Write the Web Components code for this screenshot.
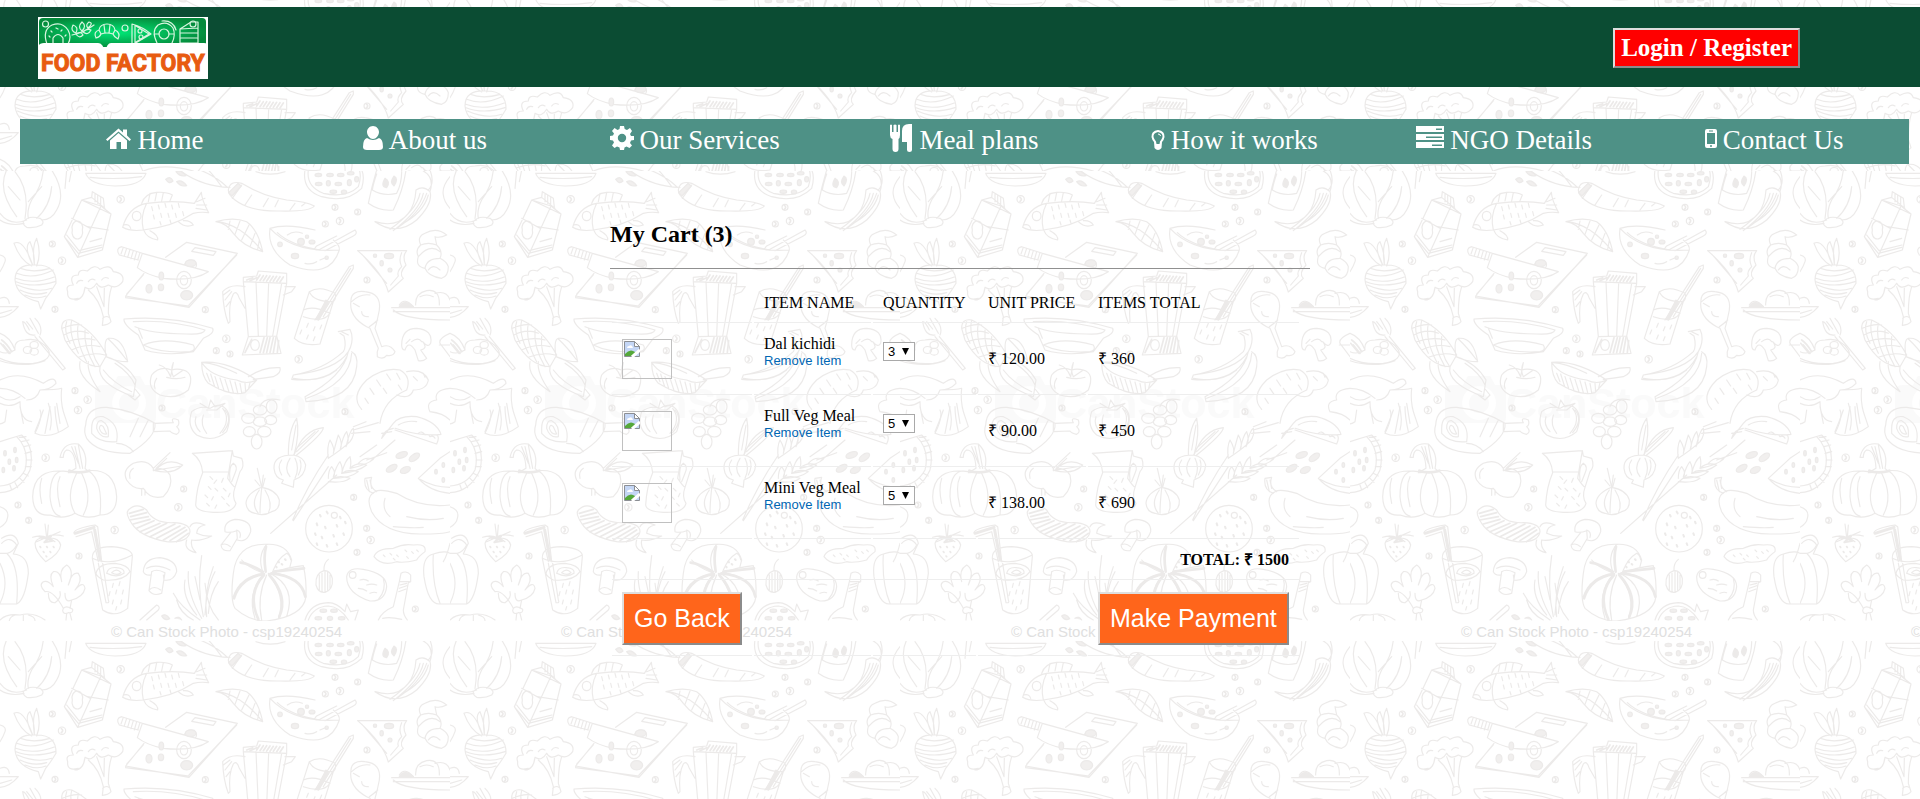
<!DOCTYPE html>
<html lang="en">
<head>
<meta charset="utf-8">
<title>Food Factory - My Cart</title>
<style>
html, body { margin: 0; min-height: 100%; background: #fff; }
body { font: 16px "Liberation Serif", serif; color: #000; }
</style>
</head>
<body>
<food-page>
  <food-header></food-header>
  <food-nav>
    <nav-item icon="home">Home</nav-item>
    <nav-item icon="user">About us</nav-item>
    <nav-item icon="cog">Our Services</nav-item>
    <nav-item icon="cutlery">Meal plans</nav-item>
    <nav-item icon="bulb">How it works</nav-item>
    <nav-item icon="server">NGO Details</nav-item>
    <nav-item icon="mobile">Contact Us</nav-item>
  </food-nav>
  <shopping-cart></shopping-cart>
</food-page>

<template id="backdrop">
<style>
:host { position: absolute; inset: 0; overflow: hidden; z-index: -1; }
.doodles { display: block; width: 100%; height: 100%; }
.credits { position: absolute; left: 0; top: 622px; display: grid; grid-auto-flow: column; grid-auto-columns: 450px; }
.credits span { padding-left: 111px; font: 15px/20px "Liberation Sans", sans-serif; color: #e0e0e0; white-space: nowrap; }
</style>
<svg class="doodles" aria-hidden="true">
<defs><pattern id="food" width="450" height="470" y="171" patternUnits="userSpaceOnUse">
<rect width="450" height="470" fill="#fff"/>
<g fill="#fafafa"><path fill-rule="evenodd" d="M95 222q0-8 8-8h10l5-9h22l5 9h6q5 0 5 6v26q0 6-6 6H101q-6 0-6-6zM129 215a17 17 0 1 0 .1 0zM129 222a10 10 0 1 1-.1 0z"/>
<text x="156" y="247" font-family="Liberation Sans, sans-serif" font-weight="bold" font-size="43">CanStock</text></g>
<g fill="none" stroke="#eceae9" stroke-width="3.4" stroke-linecap="round" stroke-linejoin="round">
<g transform="translate(0 -1) scale(.33333)">
<!-- cabbage -->
<path d="M0 130Q30 170 80 150M20 0Q-10 60 50 140M45 5Q90 60 75 145M130 0Q125 50 95 90Q80 120 85 145M155 0Q200 70 170 120Q155 150 125 150M110 145Q150 110 155 50M60 90L25 50M85 95L125 50M70 155Q85 135 120 145Q135 155 125 165Q105 175 80 172Q68 165 70 155M200 0L195 55M215 0L208 35M0 150Q30 170 72 160"/>
<!-- plate -->
<path d="M257 10H438Q425 48 345 48Q270 45 257 10M270 22Q350 30 425 20"/>
<!-- seeds -->
<path d="M497 28q15-12 22 5q-12 12-22-5M530 35q15-8 30 12q-18 5-30-12M528 5q15-8 30 12q-18 5-30-12" fill="#f1efee"/>
<!-- milk carton -->
<path d="M193 200L245 90L333 132L307 240L233 262ZM245 90L303 108L333 132M303 108L233 262M245 90L275 82L315 115M275 82L277 65L310 85L313 112M285 70v25M293 75v25M302 80v28M262 170L325 180M215 145L270 175M217 180a16 20 0 1 0 30 0a16 20 0 1 0-30 0M197 205L235 250L305 232M200 195L237 242L306 225M270 215l35-10"/>
<!-- fish -->
<path d="M368 172Q385 110 440 100Q520 90 583 100L604 67Q605 90 626 128Q600 125 580 130Q520 170 430 180Q390 185 368 172M440 100Q420 140 430 180M425 100Q435 70 470 67Q500 65 517 75L510 92M450 70l-5 25M470 68l-5 25M490 68l-5 25M432 182Q440 205 473 210Q475 195 450 182M535 155Q555 175 580 165Q570 150 550 152M590 95l25-10M590 105l30 0M588 115l32 5M397 138a13 14 0 1 0 26 0a13 14 0 1 0-26 0M370 165q18-5 22 10M455 110l3 12M475 105l3 12M495 100l3 12M515 105l3 12M535 100l3 12M460 135l3 12M482 130l3 12M504 130l3 12M526 130l3 12M548 125l3 12M480 155l3 10M510 150l3 10"/>
<!-- carrot -->
<path d="M545 5Q610 50 690 52M600 0Q650 20 680 50M625 0Q640 15 665 50M685 60Q690 30 725 40Q790 80 860 90Q920 95 943 108Q930 125 840 123Q750 125 705 90Q685 75 685 60M690 75L715 40M697 85L725 45M735 105L755 75M790 110L805 85M835 90l-10 20M870 120l15-20M905 108l10-8"/>
<path d="M686 68L714 40L724 48L696 78Z" fill="#f1efee"/>
<path d="M768 5Q810 20 855 5"/>
<!-- leaf -->
<path d="M648 155Q700 140 740 155Q775 180 788 245Q730 230 700 190Q680 160 648 155M648 155Q720 160 788 245M690 153l-5 25M720 153l-15 40M747 165l-22 45M765 190l-15 40M778 210l-5 28"/>
<!-- pomegranate -->
<path d="M915 0Q905 60 965 80Q1040 100 1085 55Q1095 20 1085 0M925 0Q918 50 970 70Q1040 85 1075 50Q1085 20 1078 0"/>
<g fill="#f1efee"><ellipse cx="955" cy="15" rx="10" ry="5"/><ellipse cx="990" cy="15" rx="10" ry="5"/><ellipse cx="1022" cy="15" rx="10" ry="5"/><ellipse cx="1052" cy="10" rx="10" ry="5"/><ellipse cx="956" cy="42" rx="10" ry="5"/><ellipse cx="985" cy="40" rx="6" ry="8"/><ellipse cx="1015" cy="42" rx="10" ry="5"/><ellipse cx="1048" cy="38" rx="6" ry="9"/><ellipse cx="1000" cy="65" rx="10" ry="5"/><ellipse cx="1032" cy="66" rx="8" ry="6"/><ellipse cx="1070" cy="28" rx="6" ry="8"/></g>
<!-- jar, chilli -->
<path d="M1130 0Q1115 50 1105 100Q1140 125 1180 120Q1210 60 1218 0M1130 12Q1120 40 1117 60Q1150 80 1190 70Q1205 40 1205 5"/>
<path d="M1155 25q18 10 5 28q-20-2-5-28M1182 18q15 8 0 30q-15-10 0-30" fill="#eceae9"/>
<path d="M1265 0Q1305 20 1290 65Q1300 100 1250 150Q1190 200 1125 155Q1190 175 1225 130Q1245 105 1248 60Q1270 45 1290 65M1290 0Q1305 40 1285 60M1285 75Q1270 130 1200 165M1280 70Q1260 130 1190 175M1270 70Q1260 120 1180 182M1260 70Q1250 120 1170 178"/>
<!-- soup bowl -->
<path d="M810 175Q860 160 945 180M1000 210Q1020 225 1018 240Q880 250 810 175Q800 240 870 285Q990 330 1018 240M832 188Q870 225 960 240M960 238L1065 180Q1075 190 1060 198L975 242M960 238Q935 245 950 228L1010 198M862 195q20-15 45-5M915 280q20 5 35-5M960 270l20-8"/>
<g fill="#f1efee"><circle cx="840" cy="223" r="7"/><ellipse cx="885" cy="258" rx="11" ry="8"/><circle cx="903" cy="215" r="10"/><ellipse cx="936" cy="216" rx="9" ry="6"/><circle cx="921" cy="200" r="5"/><circle cx="980" cy="263" r="5"/></g>
<!-- beet -->
<path d="M95 288Q60 270 42 220Q70 205 98 285Q70 230 90 215Q105 250 103 285Q95 230 110 205Q125 250 110 288M45 330Q45 280 110 285Q170 285 168 340Q150 370 137 385L122 417L115 395Q50 380 45 330M50 310Q100 330 160 300M47 325Q100 345 165 320M48 335Q100 355 165 335M52 345Q110 370 155 355M60 360Q100 380 140 368M75 375Q110 390 138 378M60 295Q100 310 150 295"/>
<path d="M0 255q20 5 15 20Q10 290 0 305"/>
<!-- broccoli -->
<path d="M235 385Q200 395 203 365Q195 345 220 345Q205 315 235 315Q235 295 262 303Q285 280 300 298Q330 280 340 305Q375 310 368 335Q350 360 325 345Q300 360 290 340Q275 365 255 352Q250 390 225 390M265 360Q300 390 310 440L307 466Q325 465 333 455L325 430Q325 380 335 350M290 350L312 410L313 355M308 445q10-10 20-2M230 340q5-12 18-8M265 335q8-12 20-5M305 330q8-12 20-5"/>
<!-- knife and board -->
<path d="M497 262L560 217L712 250L567 412L377 378L432 310M377 378V383L567 408M380 372L430 315M567 405L710 255M585 233L648 245L640 256L575 244ZM427 250L625 305Q580 335 490 325Q440 315 412 293L427 250L365 230Q345 235 358 255L415 270M370 232l-7 20M380 235l-7 22M390 238l-7 24M400 242l-7 24M410 245l-7 25M420 248l-7 22M550 330m-20 0a22 26 0 1 0 44 0a22 26 0 1 0-44 0M541 331a11 14 0 1 0 22 0a11 14 0 1 0-22 0M553 285q8-20 30-14q12 12 3 23"/>
<g fill="#f1efee"><ellipse cx="447" cy="356" rx="9" ry="13"/><ellipse cx="483" cy="352" rx="8" ry="10"/><ellipse cx="484" cy="318" rx="7" ry="12"/><ellipse cx="560" cy="376" rx="18" ry="14"/><ellipse cx="572" cy="280" rx="16" ry="10"/></g>
<!-- baking dish -->
<path d="M372 447Q510 435 638 475Q645 490 610 505L580 545Q500 560 435 540L415 495Q370 465 372 447M400 455Q510 448 615 480Q610 495 560 492Q450 490 405 470M430 525Q490 500 580 525Q590 540 570 545Q480 550 430 525M415 475l12 30"/>
<!-- blender -->
<path d="M730 335L860 340L830 498L745 500ZM745 500L727 555L843 550L830 498M730 335V322L770 318M770 318L775 303L860 310V340M768 335L775 498M806 338L800 498M845 340L818 498M735 350Q690 340 668 365Q670 420 685 460L690 455Q685 400 700 372Q710 360 718 385L735 415M855 350H886L875 365L850 375M752 525a13 16 0 1 0 26 0a13 16 0 1 0-26 0M670 375l20-15M675 390l20-25M678 410l12-15"/>
<path d="M740 330l18-7 M750 332l20-9M770 330l10-15M780 332l10-15M790 332l10-15M800 333l10-15M810 334l10-15M820 334l10-15M830 335l10-15M840 336l10-15M735 548l20-40M780 548l12-45M790 548l12-45M800 548l10-45M810 548l10-45M820 548l8-45M832 547l4-35" stroke-width="5"/>
<!-- glass with straw -->
<path d="M928 365Q960 345 1005 370Q1010 385 1000 395L960 522Q910 530 883 505L928 365Q940 395 1000 395M910 420Q940 405 990 430Q970 460 910 440M945 450L1048 290L1060 285L1060 295L970 440M1052 295L955 450M925 460l-5 12M945 470l-5 12M965 465l-5 12M905 480l-5 12M925 495l-5 12M945 500l-5 12"/>
<path d="M978 390L948 448L956 450L986 400Z" fill="#eceae9"/>
<!-- pizza slice -->
<path d="M1073 242L1220 242Q1205 260 1218 285Q1195 310 1210 325L1165 366Q1150 310 1073 242M1205 248Q1195 270 1205 290Q1190 305 1195 318L1172 345M1085 252L1160 340"/>
<g fill="#f1efee"><ellipse cx="1167" cy="258" rx="14" ry="8"/><ellipse cx="1145" cy="280" rx="5" ry="8"/><circle cx="1125" cy="257" r="5"/><circle cx="1170" cy="300" r="6"/></g>
<!-- croissant -->
<path d="M1340 195Q1310 170 1275 190Q1250 200 1262 225Q1245 240 1255 260Q1245 290 1275 295Q1285 320 1325 325Q1345 318 1345 290M1340 195Q1320 205 1305 200L1310 225Q1330 245 1320 265Q1340 275 1345 290M1262 225Q1285 215 1310 225M1255 260Q1290 220 1320 245M1275 295Q1280 265 1320 265M1285 300Q1300 280 1320 300M1350 20Q1325 50 1330 75Q1332 95 1350 115"/>
<!-- drumstick -->
<path d="M1100 470Q1045 440 1053 390Q1055 360 1095 365Q1145 370 1138 420Q1130 460 1125 475L1145 530Q1170 520 1185 545Q1180 560 1160 556Q1150 570 1132 560Q1130 545 1135 535L1110 475ZM1055 395Q1080 370 1110 375M1085 425Q1085 440 1105 440M1108 470q15-10 25-20M1060 400l18 10"/>
<!-- fruit plate -->
<path d="M1175 413H1350M1180 420Q1210 450 1350 450M1180 425H1350M1198 405q15-25 42 5M1247 405Q1245 370 1280 362Q1320 355 1318 405M1305 370Q1340 360 1350 390M1260 380q20-10 40 0M0 410H55Q30 440 0 442M0 385Q25 375 28 400M0 430l35-10"/>
<path d="M1198 410q15-25 42 0z" fill="#eceae9"/>
<!-- fork and plate -->
<path d="M0 490Q30 500 45 540Q20 555 0 545M45 540Q40 510 75 510Q120 500 145 540Q160 570 100 580Q40 585 0 565M0 572Q70 595 135 572M68 455Q75 500 105 495M90 445L115 490M105 445Q130 470 120 495M68 455q8 0 20 25M80 455l18 22M118 500L196 595L188 600L105 500M70 540a12 10 0 1 0 25 0a12 10 0 1 0-25 0M90 525a12 10 0 1 0 25 0a12 10 0 1 0-25 0M90 545a12 10 0 1 0 25 0a12 10 0 1 0-25 0"/>
<path d="M5 510q15 10 30 35M10 525l20 25M2 520l25 30" stroke-width="5"/>
<!-- corn -->
<path d="M185 475Q185 445 215 450Q280 480 320 555L300 590Q240 590 195 510ZM200 455Q190 480 210 520M215 452Q205 490 235 550M235 460Q225 510 260 575M255 480Q250 530 285 590M275 500Q270 550 298 588M187 475Q220 460 245 465M192 495Q230 475 265 490M200 515Q245 500 285 510M215 540Q255 520 300 530M235 562Q275 545 315 555M318 560Q310 510 325 505Q370 500 383 575Q350 575 318 560M325 507Q350 530 380 570M240 575Q230 620 300 665Q260 610 265 575M300 590Q290 640 400 680L408 630Q380 580 320 560M345 580Q390 610 405 645M310 600Q340 640 395 665M385 675l20 15 15-15-15-18"/>
<!-- mushroom -->
<path d="M1205 525Q1205 475 1250 475Q1300 480 1292 520Q1285 535 1268 515Q1285 535 1262 540L1280 565Q1270 575 1255 572L1245 540Q1225 510 1215 540Q1205 540 1205 525M1218 520l12-12M1235 515Q1255 500 1265 515M1350 490Q1315 505 1320 520L1350 560M1318 525H1350"/>
<!-- banana -->
<path d="M1015 485L1050 478L1055 492Q1060 520 1045 545Q1010 600 880 615L875 628Q1000 640 1040 560M1020 490L1032 498Q1040 530 1030 545Q970 600 880 615M1045 545Q1030 620 915 680L918 695Q1060 690 1070 590Q1075 555 1055 545M1055 550Q1050 640 920 685M880 625Q960 640 1010 600M1025 485l20 10"/>
<!-- tomato -->
<path d="M515 600Q480 585 455 615Q440 655 480 675Q530 690 565 660Q585 610 550 600Q530 595 515 600M478 585Q500 590 512 620L520 578Q510 600 520 620L550 600M500 622Q530 630 555 622M470 625Q460 640 465 655"/>
<!-- pan -->
<path d="M605 577Q680 570 770 630Q740 645 710 630Q630 620 605 577Q605 620 625 640Q690 680 735 668L770 630M605 577Q650 580 710 610M745 620Q790 590 840 593Q845 610 820 620Q790 625 760 628M620 610l10 25M632 612l12 38M645 620l12 38M660 624l12 38M675 628l12 38M690 632l10 36M705 636l8 32M720 640l5 28M735 640l2 25M750 638l-5 20"/>
<!-- cookies and lettuce -->
<path d="M1085 718Q1050 680 1100 630Q1150 590 1200 600Q1235 620 1220 660Q1150 690 1140 760M1220 605Q1270 595 1285 630Q1280 660 1240 660Q1230 690 1190 675M1130 630l12 18M1160 612l12 18M1190 610l10 18M1110 655l12 18M1150 655l10 15M1195 645l10 15M1095 685l10 15M1240 620l12 12M1270 610l5 12"/>
<path d="M0 630Q60 600 130 640Q165 615 168 640Q150 660 120 660Q110 690 80 690M120 660Q170 660 185 655Q180 700 195 740L205 770Q150 810 105 790Q130 740 120 720M0 680Q30 700 60 680M0 655Q40 655 75 685M145 700Q160 740 150 780M170 700L180 760M1350 655Q1300 660 1310 690Q1275 695 1290 725Q1330 730 1350 750"/>
</g>
<g transform="translate(0 229) scale(.33333)">
<path d="M0 10Q30 25 60 5Q60 60 95 65M105 95Q120 60 130 30M135 100Q145 50 150 20M175 95Q165 50 165 20M20 30L15 65Q0 75 -5 70M60 20L70 70M840 0Q790 -10 780 20"/>
<!-- ham -->
<path d="M257 75Q260 20 320 22Q400 30 465 70Q470 110 390 160Q290 160 260 115Q250 95 257 75M275 85Q275 45 310 50Q360 70 350 125Q300 130 275 100ZM290 85Q290 60 305 62Q330 75 325 110Q300 115 290 85M298 85Q300 70 310 80L320 102Q305 105 298 85M465 70L520 68Q510 50 535 60Q540 75 530 80Q545 95 530 103Q515 100 510 93L460 95M460 70v25M350 130Q380 130 400 155M420 110L445 60M390 110L415 55"/>
<!-- round tomato -->
<path d="M630 25Q600 15 575 35Q560 80 590 105Q640 130 680 95Q700 40 670 20Q650 10 630 25M600 10L625 25L632 0L645 20L675 10L650 30L620 30M588 50Q580 75 600 95M610 45Q600 75 620 100M668 25Q695 60 660 100M675 30Q700 60 668 98"/>
<!-- grapes -->
<g><ellipse cx="745" cy="55" rx="20" ry="15"/><ellipse cx="780" cy="30" rx="20" ry="15"/><ellipse cx="815" cy="20" rx="16" ry="20"/><ellipse cx="780" cy="65" rx="20" ry="14"/><ellipse cx="812" cy="60" rx="18" ry="14"/><ellipse cx="748" cy="95" rx="18" ry="15"/><ellipse cx="793" cy="95" rx="20" ry="16"/><ellipse cx="770" cy="125" rx="16" ry="22"/></g>
<!-- onion -->
<path d="M865 165Q865 90 890 55Q900 100 882 165Q910 90 970 83Q970 100 890 165M875 150L888 75M895 140L945 95M890 155L955 92M880 165Q820 165 822 205Q825 235 850 240L845 250L880 262L882 240Q915 230 917 195Q910 170 880 165M870 175Q850 205 870 230M885 175Q900 205 885 235M845 180Q830 200 845 225M900 180Q908 200 895 225"/>
<!-- wheat -->
<path d="M812 400L1010 225M878 360Q920 260 985 165M880 362L985 200M985 175Q980 140 990 120Q1005 145 1000 160Q1010 120 1015 105Q1030 130 1020 150Q1030 105 1040 95Q1050 120 1038 140Q1050 90 1060 85Q1065 105 1050 125Q1030 145 985 175M985 245Q1030 250 1050 235Q1020 225 1000 235Q1050 235 1075 215Q1045 205 1025 220Q1075 215 1100 195Q1070 185 1050 205Q1100 195 1120 178Q1095 168 1075 190M985 235Q985 210 995 200Q1010 220 1000 230Q1010 195 1020 185Q1030 205 1025 220Q1035 180 1050 170Q1055 190 1050 205M1060 90L1135 68M1055 100L1110 95M1060 80L1098 65M1110 185L1185 120M1100 180L1160 158M1080 170L1130 135"/>
<!-- pea pod -->
<path d="M1145 115L1180 70Q1200 45 1250 50Q1310 65 1323 103Q1260 110 1185 85M1145 115Q1150 90 1180 85M1185 90L1310 132Q1320 110 1310 105M1145 100l30 -5M1195 75Q1220 60 1250 65M1255 100q10-10 20 5q10-5 15 5q10-5 15 5"/>
<!-- watermelon -->
<path d="M0 125Q30 115 65 105Q105 140 90 210Q60 275 0 278M50 110Q90 150 75 210Q50 255 0 258M58 112l20-2M65 125l22-5M72 140l20-5M75 160l20-5M78 180h18M76 200h18M70 220l15 8M60 235l12 12M45 248l8 15M30 255l5 15M1350 155L1320 175L1255 235Q1290 275 1350 280M1260 238Q1300 262 1350 262"/>
<g fill="#f1efee"><ellipse cx="15" cy="160" rx="4" ry="8"/><ellipse cx="45" cy="150" rx="4" ry="8"/><ellipse cx="28" cy="185" rx="4" ry="8"/><ellipse cx="50" cy="180" rx="4" ry="8"/><ellipse cx="10" cy="210" rx="4" ry="8"/><ellipse cx="42" cy="205" rx="4" ry="8"/><ellipse cx="1308" cy="215" rx="4" ry="7"/><ellipse cx="1330" cy="195" rx="4" ry="7"/><ellipse cx="1330" cy="240" rx="4" ry="7"/></g>
<!-- pumpkin -->
<path d="M205 215Q100 200 98 290Q100 350 150 345Q190 360 225 340Q260 360 300 345Q350 345 350 290Q345 205 265 212M205 215Q150 200 150 290Q155 345 180 348M230 220Q195 290 225 340M245 220Q280 290 250 345M265 212Q310 240 300 345M180 172Q190 125 235 132Q265 160 255 205L265 215L205 218L228 205Q225 150 200 150Q190 155 190 172ZM225 140L240 205M235 135L248 205M215 140L235 190M125 235Q115 265 125 310M180 230Q165 260 180 320"/>
<path d="M208 212Q235 222 268 212" stroke-width="8"/>
<!-- apple -->
<path d="M460 205Q440 175 400 190Q365 210 380 240Q400 270 430 265Q450 300 490 290Q520 260 510 225Q490 195 460 212L460 205L510 158M468 205L500 175M465 212Q500 170 548 195Q520 225 465 212M470 210L545 198M425 268v18M435 270v15M390 235Q385 215 400 205"/>
<!-- jug -->
<path d="M577 160L697 152L700 168L725 175Q735 200 720 215L705 262Q695 290 708 310Q700 340 640 337Q590 335 587 315Q590 260 608 218Q605 180 577 160M608 216H688M697 152L683 235Q700 260 705 262M690 240Q685 200 700 190Q715 200 705 220L695 245M630 230l8 8M650 240l-8 10M670 235l-5 12M625 260l8 8M645 265l8 8M670 265l8 8M615 285l8 8M640 290l-5 10M665 290l8 8M690 280l-5 10M620 310l8 8M650 315l-5 10M680 310l8 8"/>
<!-- garlic -->
<path d="M785 262L772 205M785 262L790 225M780 258L765 240M788 262L795 235M785 262Q740 280 738 310Q740 335 765 340Q790 350 815 335Q840 330 838 300Q830 270 785 262M778 270Q750 310 775 340M785 265Q780 310 780 340M795 270Q820 310 805 340"/>
<!-- eggplant, squash -->
<path d="M385 330Q410 305 440 330Q460 370 520 368Q570 370 570 395Q565 430 500 425Q420 410 395 370Q375 340 385 330M570 380Q580 360 615 375Q590 380 590 400Q610 410 635 408Q600 425 575 420Q570 440 588 458Q550 450 560 420"/>
<path d="M388 340L430 328M392 350L440 338M390 360L445 350M400 372L450 358M410 385L462 362M420 395L480 370M435 402L500 370M450 410L525 372M470 415L540 378M490 420L555 382M510 422L560 390M530 425L565 400" stroke-width="5"/>
<path d="M1125 275Q1095 290 1115 335Q1150 400 1260 402Q1330 402 1350 395M1125 275Q1140 265 1190 280Q1260 325 1350 315M1120 280Q1090 270 1095 235L1115 232Q1105 260 1130 275M1100 240l8 35M1110 240l5 25M1155 295Q1145 330 1170 350M1220 350Q1280 365 1330 355M1180 380Q1240 385 1270 382M0 320Q30 330 22 355Q20 370 0 382"/>
<!-- small mushroom -->
<path d="M675 395Q670 365 705 358Q755 360 752 395Q740 430 712 420M675 395Q690 400 710 392M692 398L663 435Q665 455 690 452L712 415L710 390Q725 395 720 412M663 435q15-8 28 5"/>
<!-- cookie -->
<circle cx="987" cy="386" r="70"/><circle cx="1003" cy="346" r="9"/>
<path d="M960 345l2 4M980 335l3 5M950 370l2 6M975 380l2 5M1010 375l2 5M1035 365l2 5M1000 405l2 5M965 410l2 5M945 400l2 5M1030 400l2 5M980 435l2 5M1010 430l2 5M950 430l2 5M1020 350l2 5" stroke-width="6"/>
<!-- strawberry -->
<path d="M105 430Q110 410 140 415Q175 410 182 435Q180 460 137 485Q105 455 105 430M98 412Q120 405 140 412L135 372M142 412L145 375M140 410Q160 400 190 408M140 412L110 425M145 412L165 425M145 410L180 395"/>
<path d="M118 410l40 12-25 5 20-18" stroke-width="6"/>
<path d="M120 440l2 2M140 440l2 2M160 440l2 2M130 455l2 2M150 455l2 2M138 468l2 2" stroke-width="5"/>
<!-- juice glass -->
<path d="M277 475Q275 440 335 440Q400 445 397 470L383 625Q345 655 308 630ZM277 475Q330 500 397 465M288 520Q295 490 345 490Q385 495 390 515Q370 545 310 540Q290 530 288 520M320 520Q325 500 350 503Q375 505 372 520Q350 535 320 520M335 518q15-15 28 0q-10 10-28 0M222 398Q225 385 285 375L293 380L305 485M228 410L275 395L295 485M295 490L318 608Q330 610 325 600L308 490M340 550l-3 12M360 545l-3 12M330 575l-3 12M350 570l-3 12M370 570l-3 12M340 600l-3 12M365 600l-3 12M350 620l-3 10"/>
<path d="M225 400L282 382M284 390L300 478" stroke-width="9"/>
<!-- mushroom -->
<path d="M430 515Q432 475 480 473Q530 480 530 515Q520 545 492 540L490 525M430 515Q435 528 455 525M455 515L447 572Q460 590 485 580L495 518Q470 505 455 515M447 570q15-15 35 0M440 505Q470 490 510 510"/>
<!-- celery bunch -->
<path d="M190 625Q160 570 135 575Q115 555 130 545Q145 540 160 560Q145 525 160 515Q180 510 185 545Q175 510 200 495Q225 510 205 555Q215 515 235 520Q250 540 225 570Q250 540 255 565Q250 590 215 600L210 625M145 580Q145 610 165 608Q185 595 180 575M195 580Q195 610 215 600M190 625Q200 615 218 628Q220 640 205 638Q190 645 188 632ZM200 640L198 660M210 640L215 660"/>
<!-- spring onion leaves -->
<path d="M600 660Q540 620 520 580M605 655Q560 580 565 515M610 650Q590 560 605 467M615 645Q620 560 645 515M620 650Q610 580 640 500M625 640Q630 580 655 545M590 645Q545 590 555 540M655 660Q620 620 615 550M580 660Q540 640 530 600M600 600L585 530"/>
<!-- big melon -->
<path d="M790 520Q770 470 800 433Q710 430 700 520Q690 600 705 625Q750 665 800 663Q910 650 918 590Q920 540 910 497Q870 500 805 522M800 433Q860 430 875 480L870 500M820 510Q835 475 860 460Q870 465 872 480M790 520Q740 500 725 480M790 520Q720 530 700 590M790 522Q740 580 765 655M800 525Q770 590 785 660M805 520Q860 590 835 655M810 520Q890 560 860 650M815 518Q905 530 915 590"/>
<path d="M788 515Q745 490 722 488M792 522Q720 535 702 595M792 525Q740 580 775 658M808 525Q865 590 838 650M815 520Q905 530 916 590M797 515Q790 470 798 440M820 515L912 505" stroke-width="8"/>
<path d="M828 500l2 2M845 492l2 2M855 478l2 2M835 485l2 2" stroke-width="6"/>
<!-- date, potato, gherkin -->
<path d="M972 512Q945 520 948 555Q955 580 975 577Q1000 570 997 535Q990 510 972 512M972 512Q970 490 985 478M958 525v45M966 520v55M975 515v60M983 517v55M990 525v40"/>
<path d="M1040 530Q1045 500 1090 508Q1160 520 1160 560Q1155 605 1110 603Q1040 580 1040 530M1048 525a10 10 0 1 0 20 0a10 10 0 1 0-20 0M1080 540q15-5 25 3M1100 555q15-5 30 0M1075 565q15 0 25 8M1110 580q12-5 20-2M1150 535Q1160 570 1135 598"/>
<path d="M1122 470Q1130 445 1180 445Q1210 430 1240 435Q1280 430 1275 455Q1255 470 1250 480Q1210 490 1190 485Q1145 500 1122 470M1150 465l5 5M1170 460l5 5M1190 465l5 5M1215 450l5 5M1235 455l5 5M1180 475l5 5M1220 470l5 5M1250 450l5 5"/>
<!-- bottle -->
<path d="M1203 520Q1220 510 1232 525V545L1225 548L1210 630Q1210 645 1222 660M1203 520L1198 545L1180 620Q1145 635 1135 660M1198 545H1228M1148 655Q1170 650 1205 658M1200 555l20-5M1198 565l22-8M1196 575l22-8"/>
<!-- bell pepper -->
<path d="M1350 460Q1335 450 1300 462Q1265 470 1272 530Q1285 615 1320 612H1350M1300 462Q1295 550 1320 610M1350 430Q1340 470 1330 485M0 460H22Q40 455 50 435Q30 405 5 430M5 415Q45 390 55 430Q45 450 40 462Q85 465 85 520Q75 600 50 612H0M22 462Q60 500 50 610M0 490Q30 550 0 610"/>
<!-- lower plants -->
<path d="M420 660L470 615Q482 620 475 630L440 660M0 660Q20 640 60 645Q100 635 135 660M45 645Q30 650 28 662M70 645v17M85 645Q105 650 105 662"/>
<path d="M485 648q12-10 24 8q-15 8-24-8M525 655q12-8 20 5" fill="#f1efee"/>
<path d="M915 660Q930 610 985 608Q1010 608 1035 635L1040 612L1052 635L1075 630L1065 660M925 660Q940 620 985 618Q1020 620 1045 660"/>
<g fill="#f1efee"><ellipse cx="970" cy="632" rx="10" ry="5"/><ellipse cx="1002" cy="632" rx="10" ry="5"/><ellipse cx="955" cy="655" rx="10" ry="5"/><ellipse cx="990" cy="655" rx="8" ry="6"/><ellipse cx="1025" cy="655" rx="10" ry="5"/><ellipse cx="1205" cy="165" rx="18" ry="9" transform="rotate(-20 1205 165)"/><ellipse cx="1243" cy="172" rx="18" ry="9" transform="rotate(-35 1243 172)"/><ellipse cx="1175" cy="205" rx="18" ry="9" transform="rotate(-30 1175 205)"/><ellipse cx="1216" cy="210" rx="16" ry="9" transform="rotate(-25 1216 210)"/></g>
</g>
<g id="berries" transform="translate(0 -1) scale(.33333)"></g>
</g>
<rect y="450" width="450" height="20" fill="#fff"/>
</pattern>
<pattern id="food-top" href="#food" y="-3"/></defs>
<rect width="100%" height="100%" fill="url(#food)"/>
<rect width="100%" height="171" fill="url(#food-top)"/>
</svg>
<div class="credits"><span>© Can Stock Photo - csp19240254</span><span>© Can Stock Photo - csp19240254</span><span>© Can Stock Photo - csp19240254</span><span>© Can Stock Photo - csp19240254</span><span>© Can Stock Photo - csp19240254</span></div>
</template>

<template id="logo">
<style>
:host { display: block; width: 170px; height: 62px; }
svg { display: block; width: 100%; height: 100%; }
text { font-family: Roboto, "Liberation Sans", sans-serif; font-weight: bold; font-size: 23px; }
</style>
<svg viewBox="0 0 170 62" role="img" aria-label="Food Factory">
<defs><radialGradient id="g" cx=".47" cy=".5" r=".55"><stop stop-color="#00e676"/><stop offset="1" stop-color="#048a3b"/></radialGradient></defs>
<rect width="170" height="62" fill="#fff"/>
<path d="M1 30V5q0-4 4-4h159q4 0 4 4v25z" fill="url(#g)"/>
<g fill="none" stroke="#d8f5df" stroke-width="1.2" stroke-linecap="round" stroke-linejoin="round">
<path d="M9 27Q4 13 14 8Q24 4 30 13Q34 20 30 27M15 27V21q5-7 10 0v6M13 14l1 1M18 11l2 1M24 13l-1 1M28 18l-1 1M11 19l1 1"/>
<circle cx="7.500" cy="7" r="3"/><circle cx="87" cy="11" r="3"/><circle cx="155" cy="7" r="3"/>
<path d="M34 18Q45 16 56 8M38 16q-6-2-3-8q6 2 3 8M44 14q-5-4 0-9q5 4 0 9M50 11q-3-3 1-6q5 1-1 6M38 17q3 5 7 1q-2-4-7-1M45 15q5 4 8-2q-4-2-8 2"/>
<path d="M58 21Q55 15 61 13Q62 7 69 7Q76 7 77 13Q83 16 80 22Q76 20 75 17Q69 15 63 17Q62 20 58 21M61 13l2 4M66 8l1 8M72 8l-1 8M77 13l-2 4"/>
<path d="M94 27V7Q105 10 113 17L96 27M97 8v18M98 9L111 17L98 25"/><circle cx="102" cy="14" r="2"/><circle cx="103" cy="20" r="2"/>
<path d="M119 26Q113 14 120 8Q129 3 135 11Q138 18 134 26M116 17h5M131 17h5M124 4q11-1 14 9"/><circle cx="126" cy="17" r="5"/>
<path d="M142 12L153 5H160V26H142ZM142 12L160 11M143 16h16M143 21h16"/>
</g>
<path d="M0 29q2-3 6-3h54q5 0 7 9q2-9 6-9h93q4 0 4 3v33H0z" fill="#fff"/>
<text x="85" y="54" text-anchor="middle" fill="#e85b10" stroke="#e85b10">FOOD FACTORY</text>
</svg>
</template>

<template id="header">
<style>
:host { display: flex; align-items: center; justify-content: space-between; height: 80px; margin-top: 7px; padding: 2px 120px 0 38px; box-sizing: border-box; background: #0b4c33; }
button { height: 40px; padding: 0 6px; border: 2px solid; border-color: #dedede #8b8b8b #8b8b8b #dedede; background: #f00; color: #fff; font: bold 25px "Liberation Serif", serif; }
</style>
<food-logo></food-logo>
<button type="button">Login / Register</button>
</template>

<template id="nav">
<style>
:host { display: block; margin: 32px 11px 0 20px; background: #4e9186; }
nav { display: grid; grid-template-columns: repeat(7, 1fr); height: 45px; }
</style>
<nav><slot></slot></nav>
</template>

<template id="item">
<style>
:host { display: flex; justify-content: center; padding-top: 5px; }
a { display: flex; gap: 6px; height: 32px; color: #fff; font-size: 27px; line-height: 32px; text-decoration: none; white-space: nowrap; }
svg { height: 32px; display: block; fill: #fff; }
</style>
<a href="#"><svg aria-hidden="true"></svg><slot></slot></a>
</template>

<template id="broken">
<style>
:host { display: block; box-sizing: border-box; width: 50px; height: 40px; margin-top: 4px; border: 1px solid #c0c0c0; }
svg { display: block; margin: 1px; }
</style>
<svg width="16" height="16" viewBox="0 0 16 16" role="img" aria-label="Meal picture">
<path d="M.5.5H10.500L15.500 5.500V15.500H.5Z" fill="#c4d6f5" stroke="#8c8f94"/><path d="M10.500.5V5.500H15.500Z" fill="#fff" stroke="#8c8f94"/><path d="M3 7q0-2 2-2q3-2 4 2z" fill="#fff"/><path d="M1 15V13Q6 7 11 11V15Z" fill="#55a83a"/><path d="M8 16L16 9" stroke="#fff" stroke-width="3"/>
</svg>
</template>

<template id="qty">
<style>
:host { display: grid; width: 32px; height: 19px; margin-top: 7px; }
select, svg { grid-area: 1 / 1; }
select { appearance: none; box-sizing: border-box; width: 32px; height: 19px; margin: 0; padding: 0 0 0 4px; border: 1px solid #a9a9a9; border-radius: 0; background: #fff; color: #000; font: 13px/17px "Liberation Sans", sans-serif; }
svg { justify-self: end; align-self: center; margin-right: 6px; pointer-events: none; }
</style>
<select aria-label="Quantity"></select>
<svg width="7" height="7" viewBox="0 0 7 7"><path d="M0 0H7L3.500 7Z"/></svg>
</template>

<template id="cart">
<style>
:host { display: block; width: 700px; margin: 56px auto 0; }
h2 { margin: 0; font-size: 24px; line-height: 28px; padding-bottom: 20px; border-bottom: 1px solid #909090; }
table { width: 691px; margin-top: 13px; table-layout: fixed; border-collapse: separate; border-spacing: 2px; }
td, th { padding: 10px; border-bottom: 1px solid #eee; text-align: left; vertical-align: top; font-weight: normal; line-height: 18px; white-space: nowrap; }
.meal td { height: 49px; }
.meal a { display: block; color: #0066b3; font: 13px/15px "Liberation Sans", sans-serif; text-decoration: none; }
.meal p { margin: 15px 0 0; }
.sum { text-align: right; font-weight: bold; }
button { display: block; height: 53px; padding: 0 10px; border: 2px solid; border-color: #dedede #8b8b8b #8b8b8b #dedede; background: #ff651b; color: #fff; font: 25px "Liberation Sans", sans-serif; }
</style>
<h2>My Cart (3)</h2>
<table>
<colgroup><col style="width:140px"><col style="width:117px"><col style="width:103px"><col style="width:108px"><col></colgroup>
<thead><tr><th></th><th>ITEM NAME</th><th>QUANTITY</th><th>UNIT PRICE</th><th>ITEMS TOTAL</th></tr></thead>
<tbody></tbody>
<tfoot><tr><td class="sum" colspan="5">TOTAL: ₹ 1500</td></tr>
<tr><td><button type="button">Go Back</button></td><td></td><td></td><td></td><td><button type="button">Make Payment</button></td></tr></tfoot>
</table>
</template>

<script>
class Part extends HTMLElement {
  constructor() {
    super();
    this.attachShadow({ mode: 'open' });
    const id = this.constructor.template;
    if (id) this.shadowRoot.append(document.getElementById(id).content.cloneNode(true));
  }
}

const BERRIES = [[362,88],[1005,112],[1073,126],[1020,153],[976,162],[157,222],[186,272],[165,418],[616,419],[679,506],[649,542],[690,552],[896,568],[1101,330],[225,662],[263,689],[486,714],[1035,725],[137,863],[54,1005],[86,1051],[344,1080],[237,1158],[551,957],[535,1012],[1061,982],[1100,1075],[1112,1110],[1071,1147],[1246,1317],[234,720]];

class FoodBackdrop extends Part {
  static template = 'backdrop';
  connectedCallback() {
    this.shadowRoot.getElementById('berries').innerHTML = BERRIES.map(([x, y], i) => {
      const r = i % 3 ? 9 : 11;
      return `<circle cx="${x}" cy="${y}" r="${r}"/><path d="M${x - 2} ${y - 6}q8 5 0 12" stroke-width="5"/>`;
    }).join('');
  }
}

class FoodPage extends Part {
  connectedCallback() {
    this.shadowRoot.innerHTML = `<style>:host { display: flow-root; position: relative; min-height: 100vh; isolation: isolate; overflow: hidden; }</style><food-backdrop></food-backdrop><slot></slot>`;
  }
}

class FoodLogo extends Part { static template = 'logo'; }
class FoodHeader extends Part { static template = 'header'; }
class FoodNav extends Part { static template = 'nav'; }
class BrokenImage extends Part { static template = 'broken'; }

const ICONS = {
  home: [25, '<path d="M12.500 9L21 16.500V25H15V18H10.500V25H4V16.500Z"/><path d="M0 15.500L12.500 4.500L17 8.500V5.500H21V11.500L25 15.500L23.500 17L12.500 7.500L1.500 17Z"/>'],
  user: [20, '<path d="M10 2C13.500 2 16 5 16 8C16 11.500 13 15 10 15S4 11.500 4 8C4 5 6.500 2 10 2M4 14Q10 18 16 14Q20 15 20 23Q20 26 16 26H4Q0 26 0 23Q0 15 4 14"/>'],
  cog: [24, '<path fill-rule="evenodd" d="M10 2H14L14.700 5L17 6L20 4L22 7L20 10L21 12L24 12V16L21 16.500L20 19L22 21.500L19.500 24L16.500 22.500L14.500 23.500L14 26H10L9.500 23.500L7 22.500L4.500 24L2 21.500L4 18.500L3 16.500L0 16V12L3 11.500L4 9.500L2 7L4.500 4L7.500 6L9.500 5ZM12 9.800A4.200 4.200 0 1 0 12 18.200A4.200 4.200 0 1 0 12 9.800"/>'],
  cutlery: [23, '<path d="M0 1Q1 0 2 1V8H3.500V1Q5 0 6.500 1V8H8V1Q9 0 10 1V11Q10 14 8.500 15V25Q8.500 28 5.500 28T2.500 25V15Q0 14 0 11ZM12 7Q12 0 19 0H22V26Q22 28 19.500 28T17 26V18H12Z"/>'],
  bulb: [14, '<path fill-rule="evenodd" d="M7 6Q14 7 13.500 13Q13 16 11 18L10.500 24Q9 26 7 26T3.500 24L3 18Q1 16 .5 13Q0 7 7 6M7 8Q2 9 2.500 13Q3 15 5 17.500L5.500 20H8.500L9 17.500Q11 15 11.500 13Q12 9 7 8"/><path d="M7 10Q9.500 10 9.500 12" fill="none" stroke="#fff"/>'],
  server: [28, '<path fill-rule="evenodd" d="M0 2H28V8H0ZM20 4.500V6H26V4.500ZM0 10H28V16H0ZM10 12.500V14H26V12.500ZM0 18H28V24H0ZM16 20.500V22H26V20.500Z"/>'],
  mobile: [12, '<path fill-rule="evenodd" d="M2 5H10Q12 5 12 7V22Q12 24 10 24H2Q0 24 0 22V7Q0 5 2 5M2 9V20H10V9ZM4 6.500V7.500H8V6.500ZM6 21A1 1 0 1 0 6 23A1 1 0 1 0 6 21"/>']
};

class NavItem extends Part {
  static template = 'item';
  connectedCallback() {
    const [width, shape] = ICONS[this.getAttribute('icon')];
    const svg = this.shadowRoot.querySelector('svg');
    svg.setAttribute('width', width);
    svg.setAttribute('viewBox', `0 0 ${width} 32`);
    svg.innerHTML = shape;
  }
}

class QuantitySelect extends Part {
  static template = 'qty';
  connectedCallback() {
    const select = this.shadowRoot.querySelector('select');
    for (let n = 1; n <= 5; n++) select.add(new Option(n, n));
    select.value = this.getAttribute('value');
  }
}

const MEALS = [['Dal kichidi', 3, '120.00', 360], ['Full Veg Meal', 5, '90.00', 450], ['Mini Veg Meal', 5, '138.00', 690]];

class ShoppingCart extends Part {
  static template = 'cart';
  connectedCallback() {
    this.shadowRoot.querySelector('tbody').innerHTML = MEALS.map(([name, count, price, total]) => `
      <tr class="meal"><td><broken-image></broken-image></td>
      <td>${name}<a href="#">Remove Item</a></td>
      <td><quantity-select value="${count}"></quantity-select></td>
      <td><p>₹ ${price}</p></td><td><p>₹ ${total}</p></td></tr>`).join('');
  }
}

customElements.define('food-backdrop', FoodBackdrop);
customElements.define('food-logo', FoodLogo);
customElements.define('food-header', FoodHeader);
customElements.define('nav-item', NavItem);
customElements.define('food-nav', FoodNav);
customElements.define('broken-image', BrokenImage);
customElements.define('quantity-select', QuantitySelect);
customElements.define('shopping-cart', ShoppingCart);
customElements.define('food-page', FoodPage);
</script>
</body>
</html>
